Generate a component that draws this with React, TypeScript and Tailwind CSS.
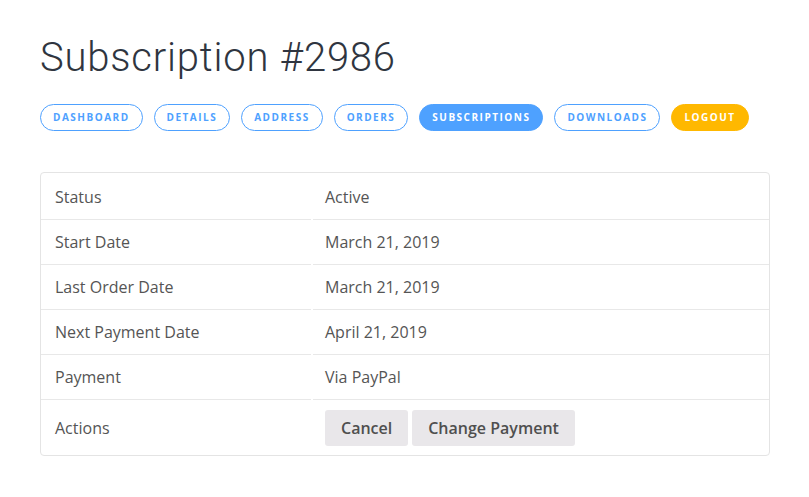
const tabs = [
  { label: "Dashboard", kind: "outline" },
  { label: "Details", kind: "outline" },
  { label: "Address", kind: "outline" },
  { label: "Orders", kind: "outline" },
  { label: "Subscriptions", kind: "active" },
  { label: "Downloads", kind: "outline" },
  { label: "Logout", kind: "logout" },
];

const rows = [
  ["Status", "Active"],
  ["Start Date", "March 21, 2019"],
  ["Last Order Date", "March 21, 2019"],
  ["Next Payment Date", "April 21, 2019"],
  ["Payment", "Via PayPal"],
];

function Pill({ label, kind }: { label: string; kind: string }) {
  const styles =
    kind === "active"
      ? "bg-[#4ea1ff] border-[#4ea1ff] text-white"
      : kind === "logout"
      ? "bg-[#ffb800] border-[#ffb800] text-white"
      : "bg-white border-[#4ea1ff] text-[#4ea1ff]";
  return (
    <a
      className={`h-[27px] px-[12px] rounded-full border flex items-center text-[10px] font-bold uppercase tracking-[0.15em] ${styles}`}
    >
      {label}
    </a>
  );
}

export default function App() {
  return (
    <div
      className="min-h-screen bg-white pt-[30px] px-[40px]"
      style={{ fontFamily: '"Open Sans", sans-serif' }}
    >
      <h1
        className="text-[40px] leading-[56px] font-light text-[#2f3540] tracking-[0.02em]"
        style={{ fontFamily: "Roboto, sans-serif" }}
      >
        Subscription #2986
      </h1>
      <nav className="flex gap-[11px] mt-[18px]">
        {tabs.map((t) => (
          <Pill key={t.label} label={t.label} kind={t.kind} />
        ))}
      </nav>
      <div className="mt-[41px] w-[730px] border border-[#e4e4e4] rounded-[4px] text-[16px] text-[#555]">
        <div className="grid grid-cols-[270px_1fr] gap-x-[2px] pt-[2px]">
          {rows.map(([k, v]) => (
            <div key={k} className="contents">
              <div className="h-[45px] pl-[14px] pb-[1px] flex items-center border-b border-[#e8e8e8]">
                {k}
              </div>
              <div className="h-[45px] pl-[12px] pb-[1px] flex items-center border-b border-[#e8e8e8]">
                {v}
              </div>
            </div>
          ))}
          <div className="h-[55px] pl-[14px] flex items-center">Actions</div>
          <div className="h-[55px] pl-[12px] flex items-center gap-[4px]">
            <button className="h-[36px] px-[16px] rounded-[3px] bg-[#e9e7ea] font-semibold text-[#4f4f4f]">
              Cancel
            </button>
            <button className="h-[36px] px-[16px] rounded-[3px] bg-[#e9e7ea] font-semibold text-[#4f4f4f]">
              Change Payment
            </button>
          </div>
        </div>
      </div>
    </div>
  );
}
